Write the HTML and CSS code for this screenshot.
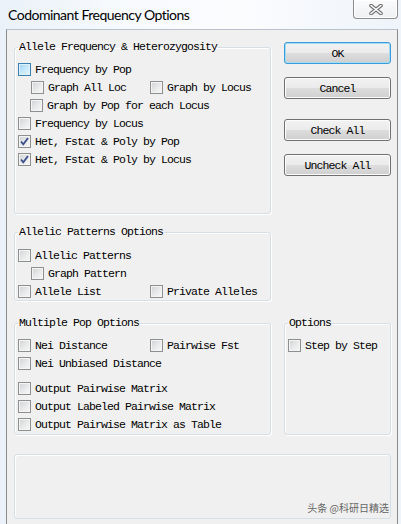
FILE: index.html
```html
<!DOCTYPE html>
<html lang="en">
<head>
  <meta charset="UTF-8">
  <title>Codominant Frequency Options</title>
  <link rel="stylesheet" href="styles.css">
</head>
<body>
  <div class="window">
    <div class="titlebar">
      <span class="title">Codominant Frequency Options</span>
      <span class="close">
        <svg width="14" height="11" viewBox="0 0 14 11">
          <path d="M2 1.5 L12 9.5 M12 1.5 L2 9.5" stroke="#6f6f6f" stroke-width="3.6" stroke-linecap="round"/>
          <path d="M2 1.5 L12 9.5 M12 1.5 L2 9.5" stroke="#ffffff" stroke-width="1.6" stroke-linecap="round"/>
        </svg>
      </span>
    </div>

    <div class="client">
      <div class="row-top">
        <fieldset class="group g-freq">
          <legend>Allele Frequency &amp; Heterozygosity</legend>
          <label class="opt"><span class="cb focus"></span>Frequency by Pop</label>
          <div class="pair sub">
            <label class="opt"><span class="cb"></span>Graph All Loc</label>
            <label class="opt"><span class="cb"></span>Graph by Locus</label>
          </div>
          <label class="opt sub2"><span class="cb"></span>Graph by Pop for each Locus</label>
          <label class="opt"><span class="cb"></span>Frequency by Locus</label>
          <label class="opt"><span class="cb"><svg width="11" height="11" viewBox="0 0 11 11"><path d="M2 5.5 L4.3 8.3 L9 2" fill="none" stroke="#3b4f8a" stroke-width="1.8"/></svg></span>Het, Fstat &amp; Poly by Pop</label>
          <label class="opt"><span class="cb"><svg width="11" height="11" viewBox="0 0 11 11"><path d="M2 5.5 L4.3 8.3 L9 2" fill="none" stroke="#3b4f8a" stroke-width="1.8"/></svg></span>Het, Fstat &amp; Poly by Locus</label>
        </fieldset>

        <div class="buttons">
          <button class="btn default">OK</button>
          <button class="btn">Cancel</button>
          <button class="btn sep">Check All</button>
          <button class="btn">Uncheck All</button>
        </div>
      </div>

      <fieldset class="group g-patterns">
        <legend>Allelic Patterns Options</legend>
        <label class="opt"><span class="cb"></span>Allelic Patterns</label>
        <label class="opt sub"><span class="cb"></span>Graph Pattern</label>
        <div class="pair">
          <label class="opt"><span class="cb"></span>Allele List</label>
          <label class="opt"><span class="cb"></span>Private Alleles</label>
        </div>
      </fieldset>

      <div class="row-mid">
        <fieldset class="group g-multi">
          <legend>Multiple Pop Options</legend>
          <div class="pair">
            <label class="opt"><span class="cb"></span>Nei Distance</label>
            <label class="opt"><span class="cb"></span>Pairwise Fst</label>
          </div>
          <label class="opt"><span class="cb"></span>Nei Unbiased Distance</label>
          <label class="opt spaced"><span class="cb"></span>Output Pairwise Matrix</label>
          <label class="opt"><span class="cb"></span>Output Labeled Pairwise Matrix</label>
          <label class="opt"><span class="cb"></span>Output Pairwise Matrix as Table</label>
        </fieldset>

        <fieldset class="group g-opts">
          <legend>Options</legend>
          <label class="opt"><span class="cb"></span>Step by Step</label>
        </fieldset>
      </div>

      <div class="status">
        <span class="watermark">头条 @科研日精选</span>
      </div>
    </div>
  </div>
</body>
</html>
```

FILE: styles.css
```css
body {
  margin: 0;
  background: #ffffff;
}
.window {
  width: 401px;
  height: 524px;
  overflow: hidden;
  background: linear-gradient(90deg, #eaf1f8 0%, #f7fafd 30%, #fbfcfe 60%, #eef4fa 100%);
  display: flex;
  flex-direction: column;
}
.titlebar {
  height: 29px;
  display: flex;
  justify-content: space-between;
  align-items: flex-start;
  padding-left: 8px;
  flex-shrink: 0;
}
.title {
  font-family: Lato, "Noto Sans", sans-serif;
  font-size: 14px;
  letter-spacing: -0.5px;
  line-height: 14px;
  margin-top: 8px;
  color: #000;
}
.close {
  width: 45px;
  height: 19px;
  margin-right: 3px;
  box-sizing: border-box;
  border: 1px solid #8c8c8c;
  border-top: none;
  border-radius: 0 0 4px 4px;
  background: linear-gradient(#fbfbfb, #eef0f3);
  box-shadow: inset 0 0 0 1px #ffffff;
  display: flex;
  align-items: center;
  justify-content: center;
}
.client {
  flex: 1;
  margin: 0 3px 0 6px;
  border: 1px solid #8a8a8a;
  border-top-color: #b9c2cc;
  border-bottom: none;
  background: #f0f0f0;
  padding: 11px 6px 0 7px;
  font-family: "Liberation Mono", monospace;
  font-size: 11.5px;
  letter-spacing: -0.9px;
  color: #000;
}
.row-top, .row-mid {
  display: flex;
  gap: 13px;
}
.group {
  margin: 0;
  box-sizing: border-box;
  border: 1px solid #d5dfe5;
  border-radius: 3px;
  box-shadow: inset 1px 1px 0 #ffffff, 1px 1px 0 #ffffff;
  padding: 7px 3px 0 3px;
  min-width: 0;
}
.group legend {
  padding: 0 1px;
  line-height: 12px;
}
.g-freq {
  width: 257px;
  height: 173px;
}
.g-patterns {
  width: 257px;
  height: 75px;
  margin-top: 12px;
  padding-top: 8px;
}
.row-mid {
  margin-top: 16px;
}
.g-multi {
  width: 257px;
  height: 118px;
}
.g-opts {
  width: 107px;
  height: 118px;
}
.opt {
  display: flex;
  align-items: center;
  gap: 4px;
  height: 18px;
  white-space: nowrap;
}
.sub {
  margin-left: 13px;
}
.sub2 {
  margin-left: 12px;
}
.spaced {
  margin-top: 7px;
}
.pair {
  display: grid;
  grid-template-columns: 132px auto;
}
.pair.sub {
  grid-template-columns: 119px auto;
}
.cb {
  width: 13px;
  height: 13px;
  box-sizing: border-box;
  flex-shrink: 0;
  border: 1px solid #8e8f8f;
  background: linear-gradient(135deg, #cfd1d4 0%, #e9eaeb 55%, #f7f7f7 100%);
  box-shadow: inset 0 0 0 1px #f4f4f4;
  display: flex;
  align-items: center;
  justify-content: center;
}
.cb.focus {
  border-color: #3c7fb1;
  background: linear-gradient(135deg, #9fd4f3 0%, #c8e9fa 55%, #eaf6fd 100%);
  box-shadow: inset 0 0 0 1px #def0fb;
}
.buttons {
  width: 107px;
  padding-top: 1px;
  display: flex;
  flex-direction: column;
}
.btn {
  height: 22px;
  margin: 0;
  padding: 0;
  font-family: "Liberation Mono", monospace;
  font-size: 11.5px;
  letter-spacing: -0.9px;
  color: #000;
  border: 1px solid #707070;
  border-radius: 3px;
  background: linear-gradient(#f2f2f2 0%, #ebebeb 48%, #dddddd 52%, #cfcfcf 100%);
  box-shadow: inset 0 0 0 1px #fcfcfc;
}
.btn + .btn {
  margin-top: 13px;
}
.btn.sep {
  margin-top: 20px;
}
.btn.default {
  border-color: #3c9bd8;
  box-shadow: inset 0 0 0 1px #9fdcf5;
}
.status {
  position: relative;
  margin-top: 19px;
  height: 65px;
  box-sizing: border-box;
  border: 1px solid #d5dfe5;
  border-radius: 3px;
  box-shadow: inset 1px 1px 0 #ffffff;
}
.watermark {
  position: absolute;
  right: 1px;
  bottom: 3px;
  font-family: "Noto Sans CJK SC", sans-serif;
  font-size: 10px;
  letter-spacing: 0;
  color: #666;
}
```
